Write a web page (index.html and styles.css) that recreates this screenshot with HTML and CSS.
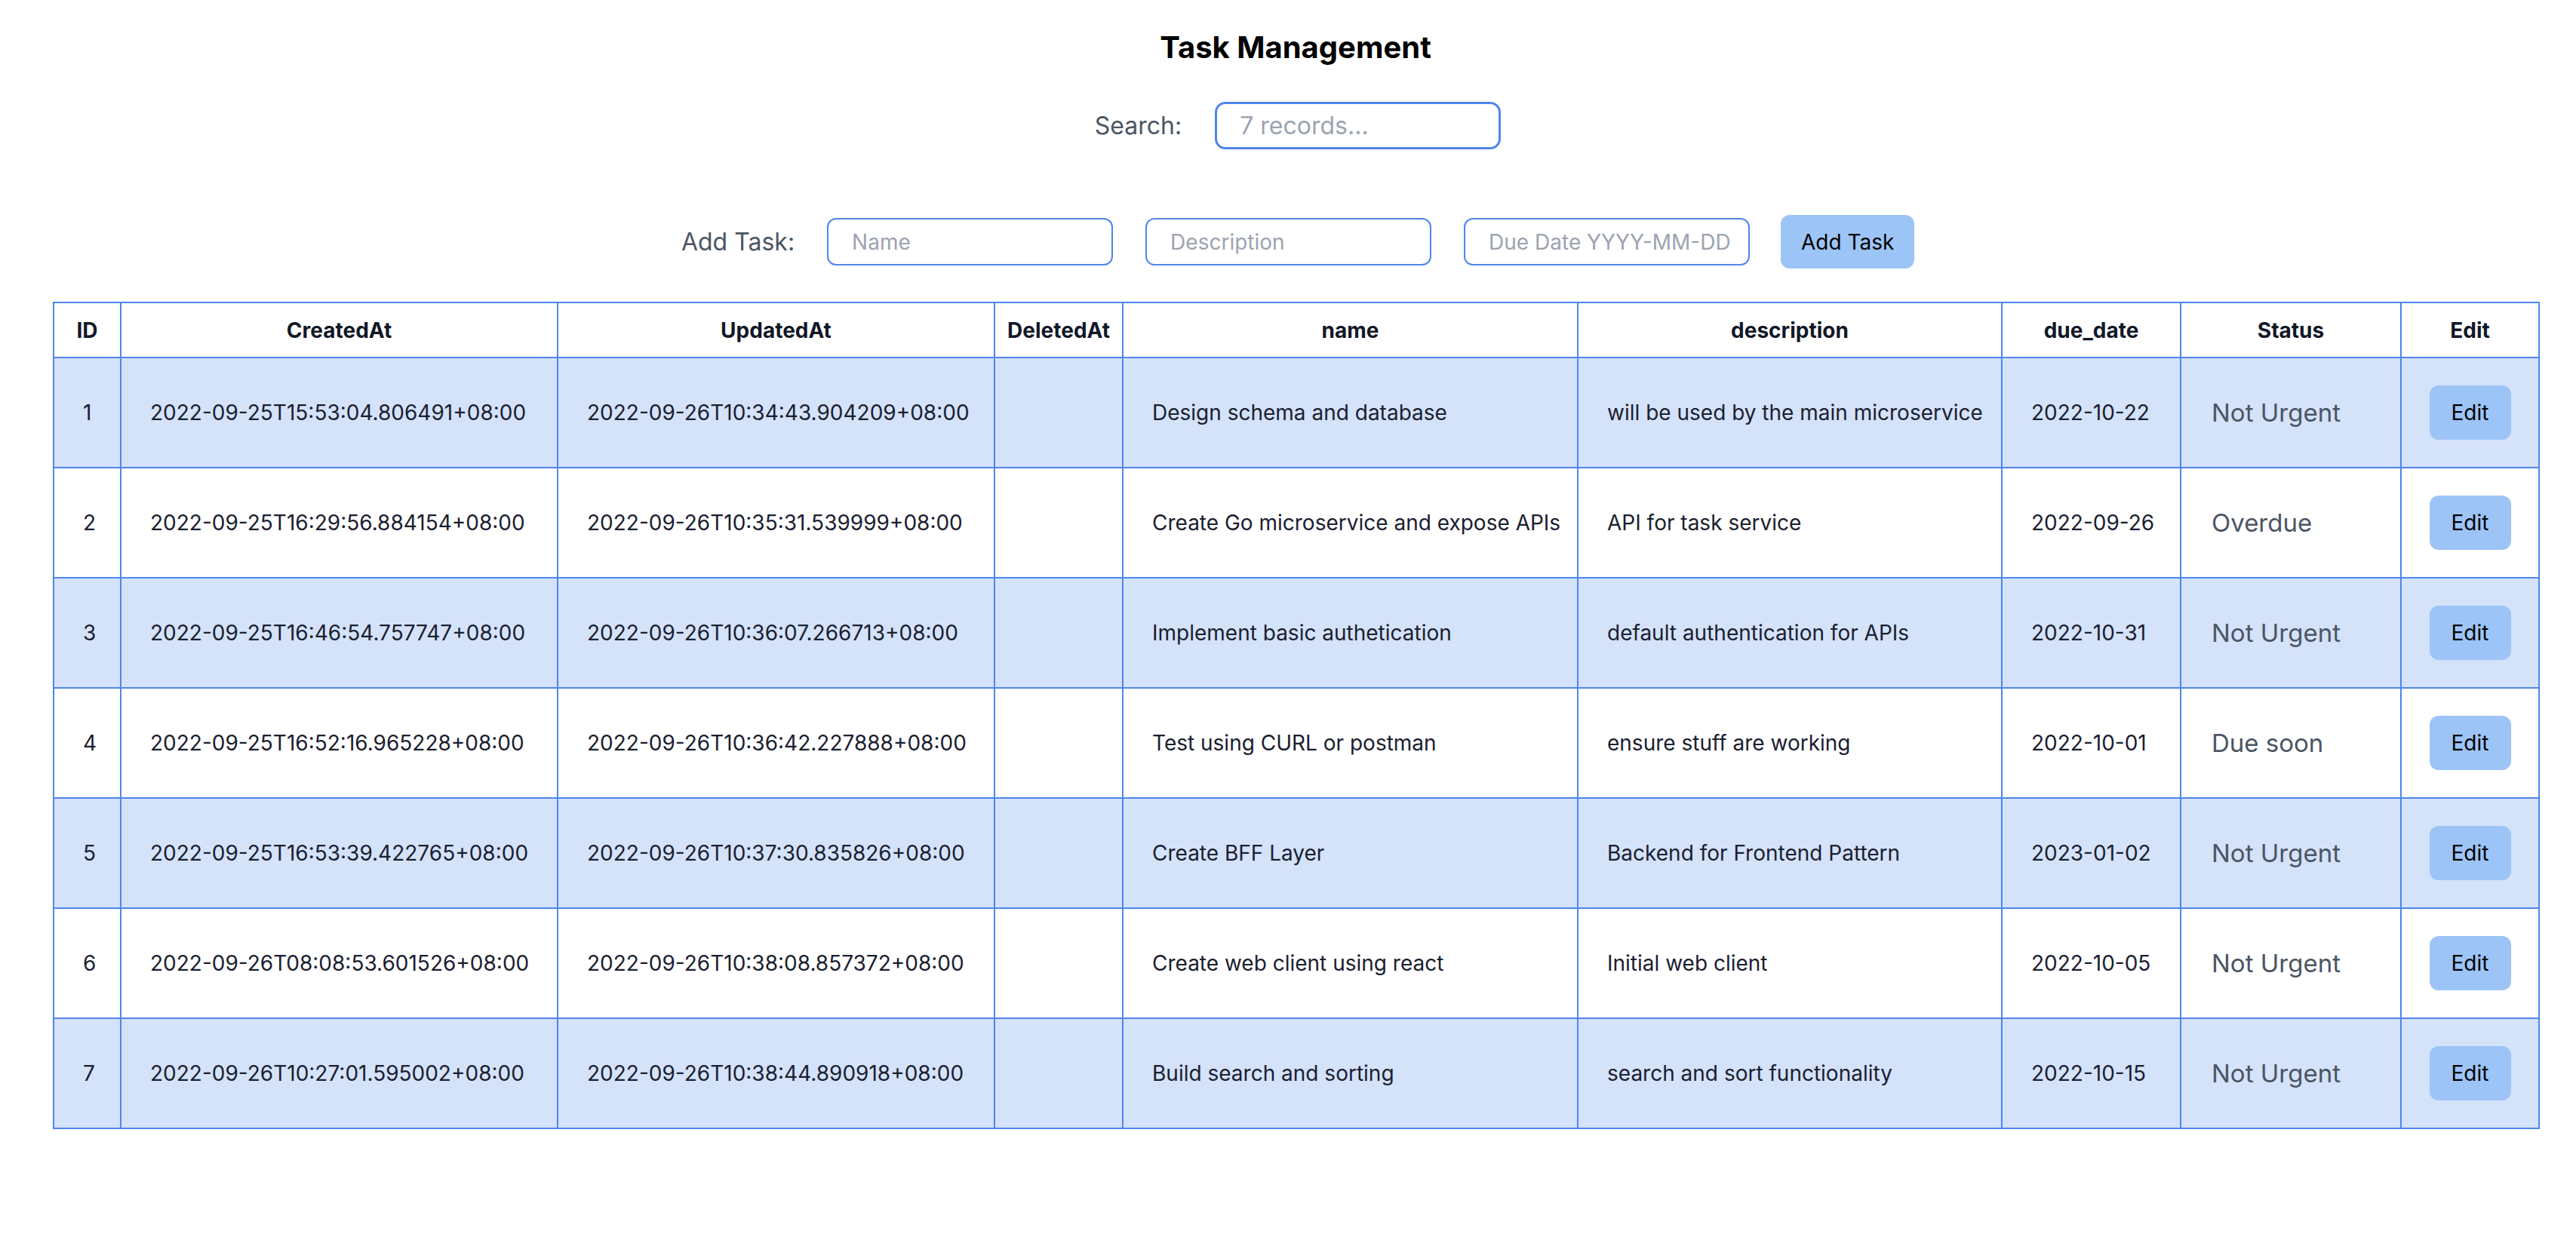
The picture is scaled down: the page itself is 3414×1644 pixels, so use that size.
FILE: index.html
```html
<!DOCTYPE html>
<html lang="en">
<head>
<meta charset="utf-8">
<title>Task Management</title>
<link rel="stylesheet" href="styles.css">
</head>
<body>
<div class="app">
  <h1 class="title">Task Management</h1>
  <div class="search-row">
    <label class="label">Search:</label>
    <input class="search-input" type="text" placeholder="7 records...">
  </div>
  <div class="add-row">
    <label class="label">Add Task:</label>
    <input class="field" type="text" placeholder="Name">
    <input class="field" type="text" placeholder="Description">
    <input class="field" type="text" placeholder="Due Date YYYY-MM-DD">
    <button class="btn add-btn">Add Task</button>
  </div>
  <table class="tasks">
    <thead>
      <tr>
        <th class="c-id">ID</th>
        <th class="c-created">CreatedAt</th>
        <th class="c-updated">UpdatedAt</th>
        <th class="c-deleted">DeletedAt</th>
        <th class="c-name">name</th>
        <th class="c-desc">description</th>
        <th class="c-due">due_date</th>
        <th class="c-status">Status</th>
        <th class="c-edit">Edit</th>
      </tr>
    </thead>
    <tbody>
      <tr class="odd">
        <td>1</td><td>2022-09-25T15:53:04.806491+08:00</td><td>2022-09-26T10:34:43.904209+08:00</td><td></td>
        <td>Design schema and database</td><td>will be used by the main microservice</td><td>2022-10-22</td>
        <td class="status">Not Urgent</td><td class="edit"><button class="btn edit-btn">Edit</button></td>
      </tr>
      <tr>
        <td>2</td><td>2022-09-25T16:29:56.884154+08:00</td><td>2022-09-26T10:35:31.539999+08:00</td><td></td>
        <td>Create Go microservice and expose APIs</td><td>API for task service</td><td>2022-09-26</td>
        <td class="status">Overdue</td><td class="edit"><button class="btn edit-btn">Edit</button></td>
      </tr>
      <tr class="odd">
        <td>3</td><td>2022-09-25T16:46:54.757747+08:00</td><td>2022-09-26T10:36:07.266713+08:00</td><td></td>
        <td>Implement basic authetication</td><td>default authentication for APIs</td><td>2022-10-31</td>
        <td class="status">Not Urgent</td><td class="edit"><button class="btn edit-btn">Edit</button></td>
      </tr>
      <tr>
        <td>4</td><td>2022-09-25T16:52:16.965228+08:00</td><td>2022-09-26T10:36:42.227888+08:00</td><td></td>
        <td>Test using CURL or postman</td><td>ensure stuff are working</td><td>2022-10-01</td>
        <td class="status">Due soon</td><td class="edit"><button class="btn edit-btn">Edit</button></td>
      </tr>
      <tr class="odd">
        <td>5</td><td>2022-09-25T16:53:39.422765+08:00</td><td>2022-09-26T10:37:30.835826+08:00</td><td></td>
        <td>Create BFF Layer</td><td>Backend for Frontend Pattern</td><td>2023-01-02</td>
        <td class="status">Not Urgent</td><td class="edit"><button class="btn edit-btn">Edit</button></td>
      </tr>
      <tr>
        <td>6</td><td>2022-09-26T08:08:53.601526+08:00</td><td>2022-09-26T10:38:08.857372+08:00</td><td></td>
        <td>Create web client using react</td><td>Initial web client</td><td>2022-10-05</td>
        <td class="status">Not Urgent</td><td class="edit"><button class="btn edit-btn">Edit</button></td>
      </tr>
      <tr class="odd">
        <td>7</td><td>2022-09-26T10:27:01.595002+08:00</td><td>2022-09-26T10:38:44.890918+08:00</td><td></td>
        <td>Build search and sorting</td><td>search and sort functionality</td><td>2022-10-15</td>
        <td class="status">Not Urgent</td><td class="edit"><button class="btn edit-btn">Edit</button></td>
      </tr>
    </tbody>
  </table>
</div>
</body>
</html>
```
FILE: styles.css
```css
* { box-sizing: border-box; }
html, body { margin: 0; padding: 0; background: #ffffff; }
body {
  font-family: Inter, "Noto Sans", "Liberation Sans", sans-serif;
  color: #1f2937;
}
.app {
  display: flex;
  flex-direction: column;
  align-items: center;
  padding-top: 39px;
}
.title {
  margin: 0 0 0 20px;
  font-size: 40px;
  line-height: 48px;
  font-weight: 700;
  color: #000;
}
.search-row {
  display: flex;
  align-items: center;
  gap: 44px;
  margin-top: 48px;
  margin-left: 26px;
}
.label {
  font-size: 32px;
  color: #4b5563;
}
.search-input {
  width: 379px;
  height: 63px;
  border: 3px solid #4f86ec;
  border-radius: 14px;
  padding: 0 30px;
  font-family: inherit;
  font-size: 32px;
  color: #1f2937;
  outline: none;
}
.search-input::placeholder, .field::placeholder { color: #9ca3af; }
.add-row {
  display: flex;
  align-items: center;
  gap: 43px;
  margin-top: 87px;
  margin-left: 26px;
}
.field {
  width: 379px;
  height: 63px;
  border: 2px solid #4f86ec;
  border-radius: 12px;
  padding: 0 8px 0 31px;
  font-family: inherit;
  font-size: 28px;
  outline: none;
}
.btn {
  border: none;
  background: #9dc4f7;
  color: #000;
  font-family: inherit;
  font-size: 28px;
  border-radius: 12px;
  cursor: pointer;
}
.add-btn {
  width: 177px;
  height: 71px;
  margin-left: -2px;
}
.tasks {
  align-self: flex-start;
  margin: 44px 0 0 70px;
  width: 3296px;
  table-layout: fixed;
  border-collapse: separate;
  border-spacing: 0;
  border-left: 2px solid #4f86ec;
  border-top: 2px solid #4f86ec;
  font-size: 28px;
}
.tasks th, .tasks td {
  border-right: 2px solid #4f86ec;
  border-bottom: 2px solid #4f86ec;
  padding: 0 38px;
  vertical-align: middle;
  white-space: nowrap;
}
.tasks th {
  height: 73px;
  font-weight: 700;
  color: #111827;
  text-align: center;
  padding: 0;
}
.tasks td {
  height: 146px;
  text-align: left;
  color: #1a2030;
}
.tasks tr.odd td { background: #d4e2fa; }
.c-id { width: 89px; }
.c-created { width: 579px; }
.c-updated { width: 579px; }
.c-deleted { width: 170px; }
.c-name { width: 603px; }
.c-desc { width: 562px; }
.c-due { width: 237px; }
.c-status { width: 292px; }
.c-edit { width: 183px; }
.tasks td.status {
  font-size: 33px;
  color: #4b5563;
  padding-left: 40px;
}
.tasks td.edit {
  text-align: center;
  padding: 0;
}
.edit-btn {
  width: 108px;
  height: 72px;
}
```
